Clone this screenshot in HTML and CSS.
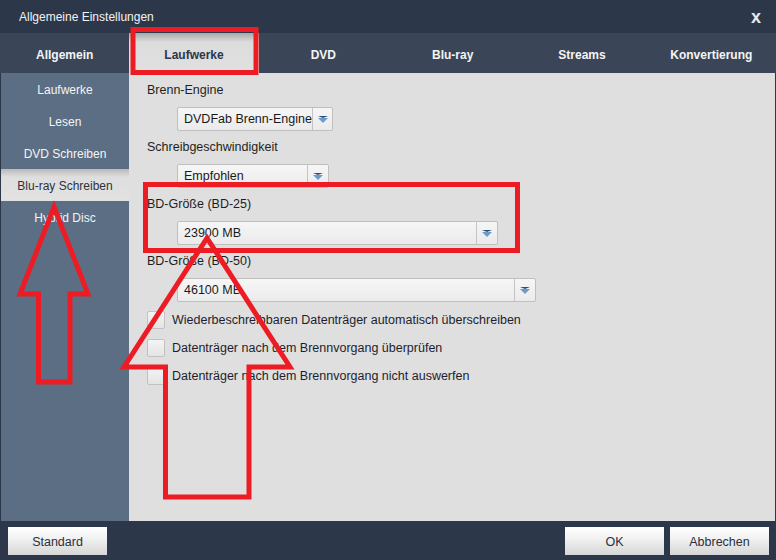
FILE: index.html
```html
<!DOCTYPE html>
<html lang="de">
<head>
    <meta charset="UTF-8">
    <title>Allgemeine Einstellungen</title>
    <link rel="stylesheet" href="styles.css">
</head>
<body>
<div class="window">
    <div class="titlebar">
        <span class="title">Allgemeine Einstellungen</span>
        <span class="close">x</span>
    </div>
    <div class="tabs">
        <div class="tab">Allgemein</div>
        <div class="tab active">Laufwerke</div>
        <div class="tab">DVD</div>
        <div class="tab">Blu-ray</div>
        <div class="tab">Streams</div>
        <div class="tab">Konvertierung</div>
    </div>
    <div class="main">
        <div class="sidebar">
            <div class="side-item">Laufwerke</div>
            <div class="side-item">Lesen</div>
            <div class="side-item">DVD Schreiben</div>
            <div class="side-item selected">Blu-ray Schreiben</div>
            <div class="side-item">Hybrid Disc</div>
        </div>
        <div class="content">
            <div class="label">Brenn-Engine</div>
            <div class="select w1"><span class="value">DVDFab Brenn-Engine</span><span class="arrow"></span></div>
            <div class="label">Schreibgeschwindigkeit</div>
            <div class="select w2"><span class="value">Empfohlen</span><span class="arrow"></span></div>
            <div class="label">BD-Größe (BD-25)</div>
            <div class="select w3"><span class="value">23900 MB</span><span class="arrow"></span></div>
            <div class="label">BD-Größe (BD-50)</div>
            <div class="select w4"><span class="value">46100 MB</span><span class="arrow"></span></div>
            <div class="checks">
                <label class="check"><span class="box"></span>Wiederbeschreibbaren Datenträger automatisch überschreiben</label>
                <label class="check"><span class="box"></span>Datenträger nach dem Brennvorgang überprüfen</label>
                <label class="check"><span class="box"></span>Datenträger nach dem Brennvorgang nicht auswerfen</label>
            </div>
        </div>
    </div>
    <div class="footer">
        <button class="btn">Standard</button>
        <div class="spacer"></div>
        <button class="btn">OK</button>
        <button class="btn">Abbrechen</button>
    </div>

    <!-- red markup drawn over the screenshot -->
    <svg class="marks" width="776" height="560" viewBox="0 0 776 560">
        <g fill="none" stroke="#ed1c24" stroke-width="5" stroke-linejoin="miter">
            <rect x="133" y="29.5" width="123" height="43"/>
            <rect x="145.5" y="184.5" width="372" height="66"/>
            <polygon points="54,207 88,294 70,294 70,382 38.5,382 38.5,294 20,294"/>
            <polygon points="207,238 290,367 249,367 249,497 165.5,497 165.5,367 124,367"/>
        </g>
    </svg>
</div>
</body>
</html>
```

FILE: styles.css
```css
body {
    margin: 0;
    font-family: "Liberation Sans", Arial, sans-serif;
    font-size: 12px;
}
.window {
    position: relative;
    width: 776px;
    height: 560px;
    display: flex;
    flex-direction: column;
    background-color: #2c3749;
}
.titlebar {
    height: 33px;
    display: flex;
    align-items: center;
    justify-content: space-between;
    padding: 0 15px 0 19px;
    color: #f2f2f2;
}
.title {
    font-size: 12px;
    padding-top: 1px;
}
.close {
    font-weight: bold;
    font-size: 18px;
    line-height: 16px;
    color: #e8e8e8;
}
.tabs {
    height: 40px;
    display: flex;
    background-color: #3a4658;
}
.tab {
    flex: 1;
    display: flex;
    align-items: center;
    justify-content: center;
    font-weight: bold;
    color: #f4f4f4;
    padding-top: 4px;
}
.tab.active {
    background: linear-gradient(#a9a9a9, #dcdcdc 9px, #e0e0e0);
    color: #2c3749;
}
.main {
    height: 448px;
    display: flex;
    border-left: 1px solid #2c3749;
    border-right: 1px solid #2c3749;
}
.sidebar {
    width: 128px;
    background-color: #5b6e83;
}
.side-item {
    height: 32px;
    box-sizing: border-box;
    padding-top: 2px;
    display: flex;
    align-items: center;
    justify-content: center;
    color: #f4f4f4;
    font-size: 12px;
}
.side-item.selected {
    background: linear-gradient(#b9b9b9, #dedede 8px, #e2e2e2);
    color: #2c3140;
}
.content {
    flex: 1;
    background-color: #dfdfdf;
    padding: 9px 0 0 18px;
    color: #1e1e1e;
}
.label {
    height: 16px;
    line-height: 16px;
    font-size: 12.5px;
    margin-bottom: 9px;
}
.select {
    margin: 0 0 8px 30px;
    height: 22px;
    display: flex;
    border: 1px solid #bfbfbf;
    border-radius: 2px;
    background: linear-gradient(#f6f6f6, #ebebeb);
}
.w1 { width: 154px; }
.w2 { width: 150px; }
.w3 { width: 319px; }
.w4 { width: 357px; }
.value {
    flex: 1;
    padding-left: 6px;
    line-height: 23px;
    font-size: 12.5px;
    color: #1a1a1a;
    white-space: nowrap;
}
.arrow {
    width: 20px;
    border-left: 1px solid #c4c4c4;
    position: relative;
}
.arrow::after {
    content: "";
    position: absolute;
    left: 5px;
    top: 8px;
    border-top: 2px solid #2e4d70;
    width: 0;
    height: 0;
    border-left: 5px solid transparent;
    border-right: 5px solid transparent;
    border-bottom: 0;
}
.arrow::before {
    content: "";
    position: absolute;
    left: 5px;
    top: 10px;
    width: 0;
    height: 0;
    border-left: 5px solid transparent;
    border-right: 5px solid transparent;
    border-top: 5px solid #6a9ccd;
}
.checks {
    padding-top: 1px;
    display: flex;
    flex-direction: column;
    gap: 10px;
}
.check {
    display: flex;
    align-items: center;
    height: 18px;
    font-size: 12.5px;
    color: #1e1e2e;
}
.box {
    width: 16px;
    height: 16px;
    border: 1px solid #c2c2c2;
    border-radius: 2px;
    background: linear-gradient(#f4f4f4, #e4e4e4);
    margin-right: 7px;
}
.footer {
    height: 39px;
    display: flex;
    align-items: flex-start;
    padding: 6px 7px 0 8px;
    gap: 6px;
    box-sizing: border-box;
}
.spacer {
    flex: 1;
}
.btn {
    width: 99px;
    height: 28px;
    padding-top: 2px;
    border: none;
    background: linear-gradient(#ffffff, #f2f2f2 40%, #d6d6d6);
    font-family: "Liberation Sans", Arial, sans-serif;
    font-size: 12.5px;
    color: #2a2f3a;
}
.marks {
    position: absolute;
    left: 0;
    top: 0;
    pointer-events: none;
}
```
